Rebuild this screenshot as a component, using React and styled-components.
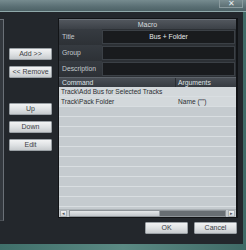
import React from "react";
import styled, { createGlobalStyle } from "styled-components";

const Global = createGlobalStyle`
  html, body { margin: 0; padding: 0; background: #4c6a6c; }
  * { box-sizing: border-box; }
`;

const Frame = styled.div`
  width: 246px;
  height: 250px;
  overflow: hidden;
  display: flex;
  flex-direction: column;
  background: linear-gradient(90deg, #3f6f6a 0%, #5b8a84 50%, #3f6a66 100%);
  font-family: "Liberation Sans", Arial, sans-serif;
`;

const TitleBar = styled.div`
  height: 12px;
  flex: none;
  position: relative;
  background: linear-gradient(180deg, #768b8f 0%, #5a6f74 60%, #4d6266 100%);
  border-bottom: 1px solid #8fa8aa;
`;

const CloseBtn = styled.div`
  position: absolute;
  right: 3px;
  top: 0;
  width: 24px;
  height: 8px;
  border: 1px solid #8a9a9e;
  border-top: none;
  background: linear-gradient(180deg, #7b8e92, #5c6f73);
  color: #e8eef0;
  font-size: 8px;
  line-height: 7px;
  text-align: center;
`;

const Body = styled.div`
  width: 243px;
  height: 232px;
  flex: none;
  background: #23272c;
  display: flex;
  flex-direction: column;
`;

const Main = styled.div`
  display: flex;
  padding-top: 6px;
  height: 206px;
`;

const LeftStrip = styled.div`
  width: 4px;
  height: 202px;
  margin-top: 1px;
  background: #33383e;
  border-top: 1px solid #6a7077;
  border-right: 1px solid #6a7077;
  border-bottom: 1px solid #4a4f55;
`;

const ButtonCol = styled.div`
  width: 54px;
  display: flex;
  flex-direction: column;
  align-items: flex-start;
  padding-left: 5px;
  padding-top: 30px;
`;

const Btn = styled.div`
  width: ${(p) => p.$w || 43}px;
  height: 12px;
  margin-top: ${(p) => p.$mt || 0}px;
  background: linear-gradient(180deg, #f2f3f4 0%, #dfe2e4 50%, #c7cbce 100%);
  border: 1px solid #9aa0a5;
  border-radius: 1px;
  color: #3c4044;
  font-size: 7px;
  line-height: 10px;
  text-align: center;
  white-space: nowrap;
`;

const Panel = styled.div`
  width: 180px;
  height: 200px;
  display: flex;
  flex-direction: column;
  background: #1d2024;
  border: 1px solid #121417;
  border-right: 2px solid #111316;
`;

const Header = styled.div`
  height: 10px;
  flex: none;
  background: linear-gradient(180deg, #51565d 0%, #3c4147 100%);
  border-top: 1px solid #6b7178;
  color: #d8dcdf;
  font-size: 7px;
  line-height: 9px;
  text-align: center;
`;

const FieldRow = styled.div`
  height: 16px;
  flex: none;
  display: flex;
  align-items: stretch;
  background: #2c3035;
`;

const Label = styled.div`
  width: 43px;
  padding-left: 3px;
  color: #c4c9cd;
  font-size: 6.8px;
  line-height: 16px;
  background: linear-gradient(180deg, #363b41, #2d3136);
`;

const Field = styled.div`
  flex: 1;
  margin: 1px 1px 1px 0;
  background: #191b1e;
  border: 1px solid #3b4046;
  color: #e6e8ea;
  font-size: 6.8px;
  line-height: 12px;
  text-align: center;
`;

const TableHead = styled.div`
  height: 10px;
  flex: none;
  display: grid;
  grid-template-columns: 117px 1fr;
  background: linear-gradient(180deg, #4a4f56 0%, #363b41 100%);
  border-top: 1px solid #5e646b;
  color: #dfe2e5;
  font-size: 6.8px;
  line-height: 9px;
`;

const HeadCell = styled.div`
  padding-left: ${(p) => p.$pl || 3}px;
  border-right: ${(p) => (p.$div ? "1px solid #2a2e33" : "none")};
`;

const TableBody = styled.div`
  flex: 1;
  background: #c5cbcf;
  display: flex;
  flex-direction: column;
  overflow: hidden;
`;

const Row = styled.div`
  height: 10px;
  flex: none;
  display: grid;
  grid-template-columns: 117px 1fr;
  border-bottom: 1px solid #d9dee1;
  background: ${(p) => (p.$light ? "#d3d8db" : "#c5cbcf")};
  color: #2a2d30;
  font-size: 6.6px;
  line-height: 9px;
  white-space: nowrap;
`;

const Cell = styled.div`
  padding-left: ${(p) => p.$pl || 2}px;
  overflow: visible;
`;

const ScrollBar = styled.div`
  height: 8px;
  flex: none;
  display: flex;
  align-items: center;
  gap: 2px;
  padding: 0 1px;
  background: #c5cbcf;
  border-top: 1px solid #aeb4b8;
`;

const Arrow = styled.div`
  width: 7px;
  height: 7px;
  flex: none;
  background: linear-gradient(180deg, #f0f1f2, #d0d4d7);
  border: 1px solid #a9afb3;
  color: #50555a;
  font-size: 5px;
  line-height: 5px;
  text-align: center;
`;

const Track = styled.div`
  flex: 1;
  height: 7px;
  display: flex;
  background: #686e73;
  border: 1px solid #8e9499;
`;

const Thumb = styled.div`
  height: 100%;
  background: linear-gradient(180deg, #e4e7e9, #c1c6ca);
  border-right: 1px solid #9aa0a5;
`;

const Footer = styled.div`
  display: flex;
  justify-content: flex-end;
  gap: 6px;
  padding-right: 6px;
  padding-top: 4px;
`;

const rows = [
  ["Track\\Add Bus for Selected Tracks", ""],
  ["Track\\Pack Folder", "Name (\"\")"],
  ["", ""],
  ["", ""],
  ["", ""],
  ["", ""],
  ["", ""],
  ["", ""],
  ["", ""],
  ["", ""],
  ["", ""],
  ["", ""],
];

export default function App() {
  return (
    <>
      <Global />
      <Frame>
        <TitleBar>
          <CloseBtn>✕</CloseBtn>
        </TitleBar>
        <Body>
          <Main>
            <LeftStrip />
            <ButtonCol>
              <Btn>Add &gt;&gt;</Btn>
              <Btn $mt={6}>&lt;&lt; Remove</Btn>
              <Btn $mt={25}>Up</Btn>
              <Btn $mt={6}>Down</Btn>
              <Btn $mt={6}>Edit</Btn>
            </ButtonCol>
            <Panel>
              <Header>Macro</Header>
              <FieldRow>
                <Label>Title</Label>
                <Field>Bus + Folder</Field>
              </FieldRow>
              <FieldRow>
                <Label>Group</Label>
                <Field />
              </FieldRow>
              <FieldRow>
                <Label>Description</Label>
                <Field />
              </FieldRow>
              <TableHead>
                <HeadCell $div>Command</HeadCell>
                <HeadCell $pl={2}>Arguments</HeadCell>
              </TableHead>
              <TableBody>
                {rows.map((r, i) => (
                  <Row key={i} $light={i < 2}>
                    <Cell>{r[0]}</Cell>
                    <Cell $pl={2}>{r[1]}</Cell>
                  </Row>
                ))}
              </TableBody>
              <ScrollBar>
                <Arrow>◂</Arrow>
                <Track>
                  <Thumb style={{ width: "58%" }} />
                </Track>
                <Arrow>▸</Arrow>
              </ScrollBar>
            </Panel>
          </Main>
          <Footer>
            <Btn>OK</Btn>
            <Btn>Cancel</Btn>
          </Footer>
        </Body>
      </Frame>
    </>
  );
}
